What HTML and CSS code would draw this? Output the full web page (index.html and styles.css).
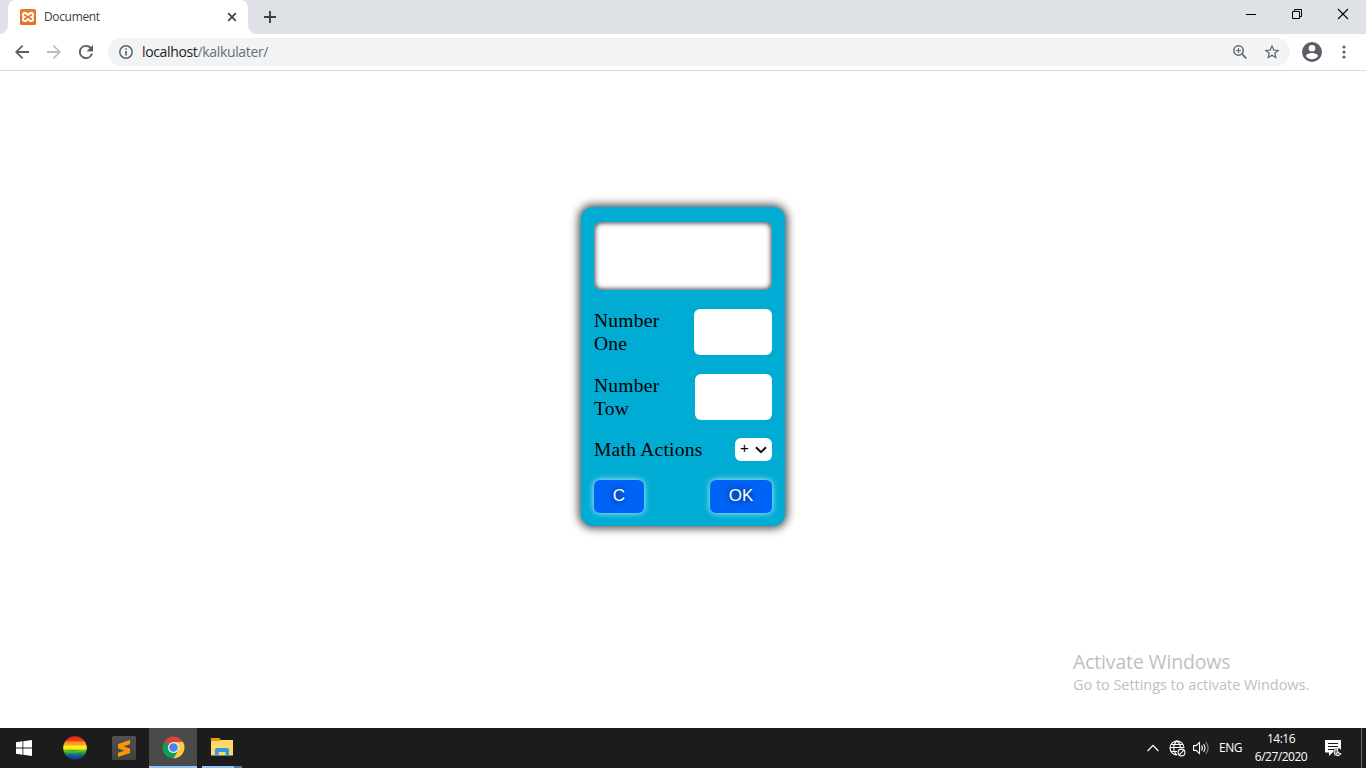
FILE: index.html
```
<!DOCTYPE html>
<html lang="en">
<head>
<meta charset="utf-8">
<title>Document</title>
<link rel="stylesheet" href="styles.css">
</head>
<body>
<div class="screen">
  <header class="tabstrip">
    <div class="tab">
      <svg class="favicon" width="16" height="16" viewBox="0 0 16 16"><rect width="16" height="16" rx="1.5" fill="#e9701f"/><path d="M1 1h14v6H1z" fill="#f08a43" opacity=".5"/><path d="M5.300 3.900C2.300 3.600 2.300 7.200 4.200 8C2.300 8.800 2.300 12.400 5.300 12.100C6.800 11.900 6.700 10.200 8 10.200S9.200 11.900 10.700 12.100C13.700 12.400 13.700 8.800 11.800 8C13.700 7.200 13.700 3.600 10.700 3.900C9.200 4.100 9.300 5.800 8 5.800S6.800 4.100 5.300 3.900Z" fill="none" stroke="#fff" stroke-width="2"/></svg>
      <span class="tab-title">Document</span>
      <svg class="tab-close" width="10" height="10" viewBox="0 0 10 10"><path d="M1.200 1.200l7.600 7.600M8.800 1.200L1.200 8.800" stroke="#3c4043" stroke-width="1.700"/></svg>
    </div>
    <svg class="new-tab" width="12" height="12" viewBox="0 0 12 12"><path d="M6 0v12M0 6h12" stroke="#3c4043" stroke-width="1.900"/></svg>
    <div class="window-controls">
      <svg width="46" height="34" viewBox="0 0 46 34"><path d="M18 14.500h10" stroke="#000"/></svg>
      <svg width="46" height="34" viewBox="0 0 46 34"><path d="M18.500 11.500h7v7h-7zM20.500 11.500v-2h7v7h-2" fill="none" stroke="#000"/></svg>
      <svg width="46" height="34" viewBox="0 0 46 34"><path d="M18 9l10 10M28 9L18 19" stroke="#000" stroke-width="1.100"/></svg>
    </div>
  </header>

  <nav class="toolbar">
    <svg class="nav-icon" width="14" height="14" viewBox="4 4 16 16"><path d="M20 10.900H7.830l5.590-5.490L12 4l-8 8 8 8 1.410-1.410L7.830 13.100H20z" fill="#5a5e63"/></svg>
    <svg class="nav-icon" width="14" height="14" viewBox="4 4 16 16"><path d="M12 4l-1.410 1.410L16.170 10.900H4v2.200h12.170l-5.580 5.490L12 20l8-8z" fill="#babcbe"/></svg>
    <svg class="nav-icon" width="14" height="14" viewBox="4 4 16 16"><path d="M17.650 6.350A8 8 0 1 0 19.730 14h-2.080A6 6 0 1 1 12 6c1.660 0 3.140.690 4.220 1.780L13 11h7V4z" fill="#5a5e63" stroke="#5a5e63" stroke-width=".3"/></svg>
    <div class="omnibox">
      <svg width="16" height="16" viewBox="0 0 16 16"><circle cx="8" cy="8" r="6.200" fill="none" stroke="#5f6368" stroke-width="1.500"/><path d="M8 7v4.500M8 4.300v1.500" stroke="#5f6368" stroke-width="1.600"/></svg>
      <span class="url"><span class="host">localhost</span>/kalkulater/</span>
      <svg class="zoom-icon" width="16" height="16" viewBox="0 0 16 16"><circle cx="6.500" cy="6.500" r="4.700" fill="none" stroke="#5f6368" stroke-width="1.500"/><path d="M10 10l4.300 4.300" stroke="#5f6368" stroke-width="1.700"/><path d="M6.500 4v5M4 6.500h5" stroke="#5f6368" stroke-width="1.100"/></svg>
      <svg class="star-icon" width="16" height="16" viewBox="1.500 1.500 21 21"><path d="M22 9.240l-7.190-.620L12 2 9.190 8.630 2 9.240l5.460 4.730L5.820 21 12 17.270 18.180 21l-1.630-7.030zM12 15.400l-3.760 2.270 1-4.280-3.320-2.880 4.380-.380L12 6.100l1.710 4.040 4.380.380-3.320 2.880 1 4.280z" fill="#5f6368"/></svg>
    </div>
    <svg class="avatar" width="20" height="20" viewBox="2 2 20 20"><path d="M12 2a10 10 0 1 0 0 20 10 10 0 0 0 0-20zm0 3a3.300 3.300 0 1 1 0 6.600A3.300 3.300 0 0 1 12 5zm0 14.200a7.200 7.200 0 0 1-6-3.220c.030-1.990 4-3.080 6-3.080s5.970 1.090 6 3.080a7.200 7.200 0 0 1-6 3.220z" fill="#5a5e66"/></svg>
    <svg class="menu-dots" width="4" height="14" viewBox="0 0 4 14"><g fill="#5f6368"><circle cx="2" cy="2" r="1.600"/><circle cx="2" cy="7" r="1.600"/><circle cx="2" cy="12" r="1.600"/></g></svg>
  </nav>

  <main class="page">
    <form class="calculator">
      <div class="display"></div>
      <div class="row field-row"><label class="label">Number<br>One</label><div class="field field-one"></div></div>
      <div class="row field-row"><label class="label">Number<br>Tow</label><div class="field field-two"></div></div>
      <div class="row action-row"><label class="label">Math Actions</label>
        <div class="select"><span>+</span><svg width="12" height="8" viewBox="0 0 12 8"><path d="M1 1.200l5 5 5-5" fill="none" stroke="#101010" stroke-width="2"/></svg></div>
      </div>
      <div class="row button-row"><button type="button" class="button clear">C</button><button type="button" class="button ok">OK</button></div>
    </form>
    <aside class="watermark">
      <div class="watermark-title">Activate Windows</div>
      <div class="watermark-text">Go to Settings to activate Windows.</div>
    </aside>
  </main>

  <footer class="taskbar">
    <div class="task start"><svg width="16" height="16" viewBox="0 0 16 16"><path d="M0 2.200l6.500-.900v6.200H0zM7.300 1.200L16 0v7.500H7.300zM0 8.500h6.500v6.200L0 13.800zM7.300 8.500H16V16l-8.700-1.200z" fill="#fff"/></svg></div>
    <div class="task rainbow">
      <svg width="24" height="24" viewBox="0 0 24 24"><defs><clipPath id="ball"><circle cx="12" cy="12" r="11.800"/></clipPath><linearGradient id="bands" x2="0" y2="1"><stop offset="0" stop-color="#d92b1c"/><stop offset=".2" stop-color="#f23c16"/><stop offset=".25" stop-color="#ff8b22"/><stop offset=".38" stop-color="#ffa51c"/><stop offset=".42" stop-color="#fff338"/><stop offset=".55" stop-color="#f5e900"/><stop offset=".59" stop-color="#65b51e"/><stop offset=".74" stop-color="#16913a"/><stop offset=".79" stop-color="#175caa"/><stop offset="1" stop-color="#192d7c"/></linearGradient></defs><g clip-path="url(#ball)"><path d="M0 0h24v24H0z" fill="url(#bands)"/><path d="M1 15q8 3 22-1" fill="none" stroke="#fff" stroke-opacity=".2"/></g></svg>
    </div>
    <div class="task sublime">
      <svg width="24" height="24" viewBox="0 0 24 24"><defs><linearGradient id="tile" x2="0" y2="1"><stop stop-color="#515151"/><stop offset="1" stop-color="#414141"/></linearGradient></defs><rect width="24" height="24" rx="1.500" fill="url(#tile)"/><path d="M18 4v4.200l-7.200 2.300L18 12.800v4.300L6 21v-4.200l7.200-2.300L6 12.200V7.900z" fill="#ff9800"/><path d="M6 7.900v4.300l12 4.900v-4.300z" fill="#f39410"/></svg>
    </div>
    <div class="task chrome active">
      <svg width="23" height="23" viewBox="0 0 48 48"><path d="M24 24L4.100 12.500A23 23 0 0 1 43.900 12.500H24z" fill="#db4437"/><path d="M4.100 12.500A23 23 0 0 0 24 47L34 29.700 24 24z" fill="#0f9d58"/><path d="M43.900 12.500A23 23 0 0 1 24 47L34 29.700 24 12.500z" fill="#ffcd40"/><circle cx="24" cy="24" r="11.500" fill="#f1f1f1"/><circle cx="24" cy="24" r="9" fill="#4285f4"/></svg>
    </div>
    <div class="task explorer">
      <svg width="22" height="18" viewBox="0 0 22 18"><path d="M0 0h8.500l1.500 2h10.500v3H0z" fill="#e29b0c"/><path d="M0 3h9l1.500-1H22v15.500H0z" fill="#ffd968"/><path d="M4 18v-6.500q0-1.500 1.500-1.500h11q1.500 0 1.500 1.500V18h-3.500v-4h-7v4z" fill="#3299df"/></svg>
      <span class="group-edge"></span>
    </div>
    <div class="tray">
      <svg class="chevron" width="12" height="8" viewBox="0 0 12 8"><path d="M.6 7L6 1.400 11.400 7" fill="none" stroke="#fff" stroke-width="1.200"/></svg>
      <svg class="network" width="17" height="17" viewBox="0 0 17 17"><g fill="none" stroke="#fff" stroke-width="1.100"><path d="M8 15A7 7 0 1 1 15 8M1 7.500h14M2 4.500h12M2 11.500h6M8 1C3.700 4 3.700 12 8 15M8 1c2.500 2 3.500 4.500 3.300 7"/><circle cx="12.500" cy="12.500" r="3.400" fill="#1c1c1c"/><path d="M10.200 14.800l4.600-4.600"/></g></svg>
      <svg class="volume" width="17" height="14" viewBox="0 0 17 14"><g fill="none" stroke="#fff" stroke-width="1.100"><path d="M.6 4.600H3L6.500 1.500v11L3 9.400H.6z"/><path d="M8.500 4.700q1.700 2.300 0 4.600M10.500 3q3 4 0 8"/><path d="M12.800 1.200q4.700 5.800 0 11.600" stroke="#888"/></g></svg>
      <span class="lang">ENG</span>
      <div class="clock"><span class="time">14:16</span><span class="date">6/27/2020</span></div>
      <svg class="notify" width="17" height="17" viewBox="0 0 17 17"><path d="M0 0h16v12.500H7.500L4 16v-3.500H0z" fill="#fff"/><path d="M3 3.500h10M3 6.500h10M3 9.500h6" stroke="#1c1c1c" stroke-width="1.100"/><circle cx="12.500" cy="12.300" r="4.300" fill="#1c1c1c"/><path d="M13 8.500a3.500 3.500 0 0 0 3 5.200A3.600 3.600 0 1 1 13 8.500z" fill="#777" stroke="#fff"/><path d="M9.500 15.500l3.500-3.500" stroke="#fff"/></svg>
      <span class="show-desktop"></span>
    </div>
  </footer>
</div>
</body>
</html>
```
FILE: styles.css
```
* { box-sizing: border-box; }
body { margin: 0; background: #fff; overflow: hidden; font-family: "Open Sans", "Noto Sans", sans-serif; }
svg { display: block; flex: none; }
.screen { width: 1366px; height: 768px; display: flex; flex-direction: column; }

.tabstrip { height: 34px; flex: none; background: #dee1e6; display: flex; padding-left: 8px; }
.tab { position: relative; width: 240px; height: 34px; background: #fff; border-radius: 8px 8px 0 0; display: flex; align-items: center; padding: 0 11px 0 12px; }
.tab::before, .tab::after { content: ""; position: absolute; bottom: 0; width: 8px; height: 8px; }
.tab::before { left: -8px; background: radial-gradient(circle at 0 0, #dee1e6 7.500px, #fff 8px); }
.tab::after { right: -8px; background: radial-gradient(circle at 100% 0, #dee1e6 7.500px, #fff 8px); }
.tab-title { margin-left: 8px; padding-bottom: 1px; font-size: 12px; letter-spacing: -.35px; color: #3c4043; }
.tab-close { margin-left: auto; }
.new-tab { margin: 11px 0 0 16px; }
.window-controls { margin-left: auto; display: flex; }

.toolbar { height: 37px; flex: none; display: flex; align-items: center; padding: 0 20px 0 15px; border-bottom: 1px solid #d8dadc; background: #fff; }
.nav-icon { margin-right: 18px; }
.nav-icon:nth-child(3) { margin-right: 15px; }
.omnibox { width: 1182px; height: 28px; border-radius: 14px; background: #f1f3f4; display: flex; align-items: center; padding: 0 10px; }
.url { margin-left: 8px; padding-bottom: 1px; font-size: 14px; letter-spacing: -.35px; color: #6b6f74; }
.host { color: #202124; }
.zoom-icon { margin-left: auto; }
.star-icon { margin-left: 16px; }
.avatar { margin-left: 12px; }
.menu-dots { margin-left: auto; }

.page { position: relative; height: 657px; flex: none; padding-top: 136px; }
.calculator { width: 204px; height: 319px; margin: 0 0 0 581px; padding: 15px 13px 13px 13px; background: #00acd3; border-radius: 12px; box-shadow: 0 0 10px 2px rgba(0,0,0,.75); display: flex; flex-direction: column; }
.display { height: 68px; background: #fff; border-radius: 7px; box-shadow: inset 0 0 5px 1px rgba(0,0,0,.75); }
.row { display: flex; justify-content: space-between; }
.field-row { margin-top: 19px; height: 46px; }
.label { font: 19.500px/23px "Liberation Serif", serif; letter-spacing: .25px; color: #000; }
.field { background: #fff; border-radius: 6px; height: 46px; }
.field-one { width: 78px; }
.field-two { width: 77px; }
.action-row { margin-top: 18px; height: 23px; }
.select { width: 37px; height: 23px; border-radius: 6px; background: #fff; display: flex; align-items: center; justify-content: space-between; padding: 0 5px; font: 15px/20px "Liberation Sans", sans-serif; }
.select span { padding-bottom: 3px; }
.button-row { margin-top: 19px; }
.button { height: 33px; border: 0; border-radius: 6px; padding: 0 0 1px; background: #0063f7; color: #fff; font: 17px/20px "Liberation Sans", sans-serif; box-shadow: 0 0 6px 0 #c8ecff; text-shadow: 0 0 6px rgba(0,0,0,.8); }
.clear { width: 50px; }
.ok { width: 62px; }

.watermark { position: absolute; left: 1073px; top: 578px; color: #c0c0c0; white-space: nowrap; }
.watermark-title { font-size: 19.500px; line-height: 26px; letter-spacing: -.17px; }
.watermark-text { font-size: 14.500px; line-height: 19px; letter-spacing: -.04px; }

.taskbar { height: 40px; flex: none; background: #1c1c1c; color: #fff; display: flex; }
.task { height: 40px; width: 48px; display: flex; align-items: center; justify-content: center; }
.rainbow { width: 54px; }
.sublime { width: 44px; margin-right: 3px; }
.active { background: #4a4a4a; border-bottom: 2px solid #8dc4f5; }
.explorer { position: relative; width: 40px; margin-left: 5px; border-bottom: 2px solid #8dc4f5; }
.group-edge { position: absolute; right: 0; bottom: -2px; width: 8px; height: 2px; background: #587ca0; }
.tray { margin-left: auto; display: flex; align-items: center; height: 40px; }
.network { margin-left: 10px; }
.volume { margin-left: 7px; }
.lang { margin-left: 9px; width: 24px; font-size: 12px; letter-spacing: -.5px; padding-bottom: 1px; }
.clock { margin-left: 9px; width: 58px; display: flex; flex-direction: column; align-items: center; font-size: 12px; line-height: 18px; padding-bottom: 1px; letter-spacing: -.5px; }
.notify { margin-left: 15px; }
.show-desktop { width: 5px; margin-left: 19px; height: 40px; border-left: 1px solid #6b6b6b; }
```
